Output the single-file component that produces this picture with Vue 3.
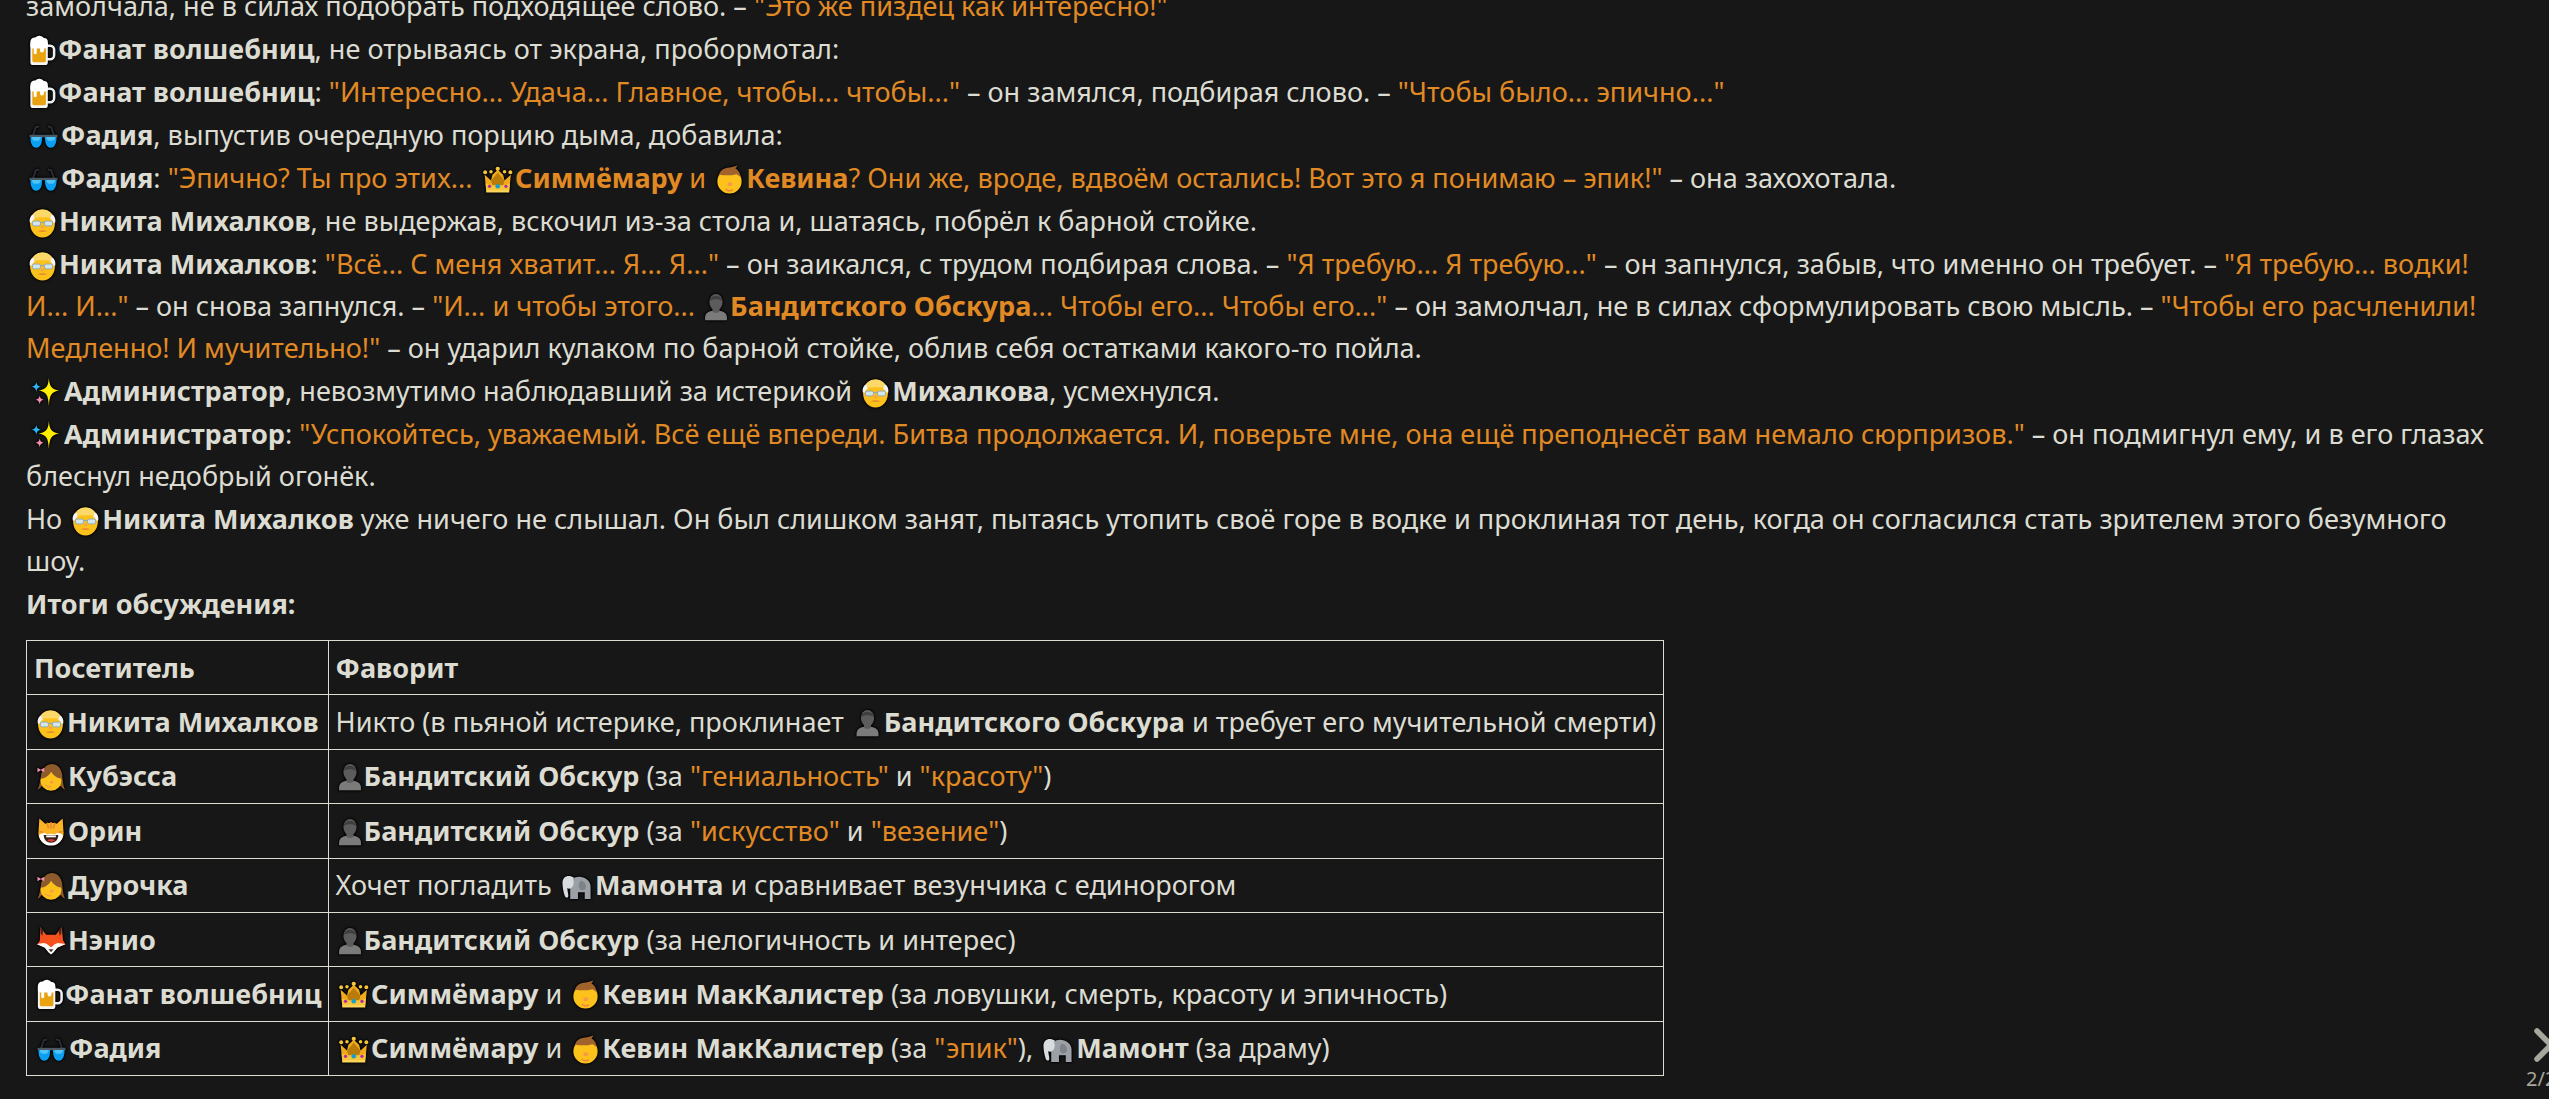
<script setup>
const rows = [
  { e: 'oldman', n: 'Никита Михалков' },
  { e: 'girl', n: 'Кубэсса' },
  { e: 'cat', n: 'Орин' },
  { e: 'girl', n: 'Дурочка' },
  { e: 'fox', n: 'Нэнио' },
  { e: 'beer', n: 'Фанат волшебниц' },
  { e: 'shades', n: 'Фадия' },
]
</script>

<template>
  <div class="page">
    <svg class="defs" aria-hidden="true">
      <defs>
        <symbol id="beer" viewBox="0 0 32 32">
          <path d="M21 11h3.500a4 4 0 0 1 4 4v6a4 4 0 0 1-4 4H21" fill="none" stroke="#eceff1" stroke-width="2.600"/>
          <path d="M4 8h18v20a3 3 0 0 1-3 3H7a3 3 0 0 1-3-3z" fill="#f5f5f5"/>
          <path d="M6 14h14v12.500a1.500 1.500 0 0 1-1.500 1.500h-11A1.500 1.500 0 0 1 6 26.500z" fill="#eaa310"/>
          <path d="M4 7a4.500 4.500 0 0 1 5-4.500 6 6 0 0 1 9 .5 4 4 0 0 1 4 4v5a2 2 0 0 1-3.500 1l-.5 3a2 2 0 0 1-4 0v-2a2 2 0 0 0-3.500 0v5a2 2 0 0 1-3 0v-6l-1 .5A2.200 2.200 0 0 1 4 12z" fill="#fff"/>
        </symbol>
        <symbol id="shades" viewBox="0 0 32 32">
          <path d="M4.500 17 8 6.500l3.500-1M27.500 17 24 6.500l-3.500-1" fill="none" stroke="#2a2f36" stroke-width="2"/>
          <path d="M1.500 15.500h29" stroke="#4a5963" stroke-width="2.600"/>
          <path d="M2.500 16.500h12c.3 7-2 11-6 11s-6-4-6-11zM17.500 16.500h12c0 7-2 11-6 11s-6-4-6-11z" fill="#0a9ff0"/>
          <path d="M4 16.500h9c0 3-1.500 4-4.500 4s-4.500-1-4.500-4zM19 16.500h9c0 3-1.500 4-4.500 4s-4.500-1-4.500-4z" fill="#4fc3f7"/>
        </symbol>
        <symbol id="crown" viewBox="0 0 32 32">
          <path d="M2.500 11l6.500 6 1.500-6 5.500-5 5.500 5 1.500 6 6.500-6-1.500 16H4z" fill="#f0a91c"/>
          <path d="M9 17l7-8 7 8-1.500 5h-11z" fill="#b97c0a"/>
          <path d="M3.500 20c8 3 17 3 25 0l-.8 9H4.300z" fill="#f7c53a"/>
          <path d="M4.200 27h23.600v2.500H4.200z" fill="#fbd45c"/>
          <circle cx="3" cy="8.500" r="2" fill="#f7c53a"/><circle cx="16" cy="5" r="2.200" fill="#f7c53a"/><circle cx="29" cy="8.500" r="2" fill="#f7c53a"/>
          <circle cx="9" cy="8" r="1.800" fill="#f7c53a"/><circle cx="23" cy="8" r="1.800" fill="#f7c53a"/>
          <circle cx="16" cy="23" r="2.400" fill="#1a9fc4"/><circle cx="7.500" cy="23" r="1.700" fill="#b02aa8"/><circle cx="24.500" cy="23" r="1.700" fill="#b02aa8"/>
        </symbol>
        <symbol id="man" viewBox="0 0 32 32">
          <circle cx="16" cy="18" r="12.500" fill="#fcc21b"/>
          <path d="M4.500 14C5 7 10 3.500 16 3.500c2.500 0 4.500-1 8-2-.5 1.500-1 2-2 3 3.500 2 5.500 5.500 5.500 9.500-1.500-2-3-3-4.500-3.500-5 1.500-12 1.500-17 .5-.7.800-1.200 1.800-1.500 3z" fill="#a1622c"/>
          <path d="M14 19.500c2-1.500 5-.5 5 1.500s-3 2.500-5 1.500z" fill="#f79a4a"/>
          <path d="M12 26c2 1.800 5 2 7.500 .5" fill="none" stroke="#ef8a3c" stroke-width="1.800"/>
        </symbol>
        <symbol id="oldman" viewBox="0 0 32 32">
          <ellipse cx="16" cy="17" rx="12.800" ry="14.500" fill="#fcc21b"/>
          <path d="M5 12C5 6 10 2.500 16 2.500S27 6 27 12c-3-2-19-2-22 0z" fill="#fbd86a"/>
          <path d="M2.800 16c-.6-4 .8-7 3.500-8.500L8 12c-1.500 1-2.500 2-3 4zM29.200 16c.6-4-.8-7-3.500-8.500L24 12c1.500 1 2.500 2 3 4z" fill="#f5f5f5"/>
          <rect x="5.500" y="14.500" width="8.500" height="5" rx="2" fill="#d3e6ec" stroke="#93a7af" stroke-width="1"/>
          <rect x="18" y="14.500" width="8.500" height="5" rx="2" fill="#d3e6ec" stroke="#93a7af" stroke-width="1"/>
          <path d="M14 16h4" stroke="#93a7af" stroke-width="1.200"/>
          <path d="M14 19v3h4v-3z" fill="#f4a93a"/>
          <path d="M11 25c3-1.500 7-1.500 10 0-3 1-7 1-10 0z" fill="#e5892e"/>
        </symbol>
        <symbol id="bust" viewBox="0 0 32 32">
          <path d="M3.500 31v-3c0-5 5-8 12.500-8s12.500 3 12.500 8v3z" fill="#7b7b7b"/>
          <path d="M12 21c0 2 8 2 8 0v-4h-8z" fill="#5c5c5c"/>
          <ellipse cx="16" cy="10.500" rx="7.500" ry="9.500" fill="#5c5c5c"/>
          <path d="M8.500 9c2-8 13-8 15 0-4-2.500-11-2.500-15 0z" fill="#3f3f3f"/>
        </symbol>
        <symbol id="sparkles" viewBox="0 0 32 32">
          <path d="M20 1c.7 9 2.800 11.500 10.500 13-7.700 1.500-9.800 4-10.500 16-.7-12-2.800-14.500-10.500-16C17.200 12.500 19.300 10 20 1z" fill="#ffee00"/>
          <path d="M7 5c.4 3 1.300 4.100 4.500 5-3.200.9-4.100 2-4.500 5.500C6.600 12 5.700 10.900 2.500 10 5.700 9.100 6.600 8 7 5z" fill="#29b6f6"/>
          <path d="M10.500 19c.4 2.600 1.100 3.500 4 4.500-2.900 1-3.600 1.900-4 5-.4-3.100-1.100-4-4-5 2.900-1 3.600-1.900 4-4.500z" fill="#f48fb1"/>
        </symbol>
        <symbol id="elephant" viewBox="0 0 32 32">
          <path d="M9 29V14c0-5 4-8 9-8 6 0 12 4 12 10v13h-6v-7h-7v7h-4z" fill="#9aa0a6"/>
          <path d="M13 7C7 3 1 6 1 12c0 4 1 10 2.500 14 1 2 3.500 2 3.500-.5 0-3-1-5-1-8 1 1 2.500 1 4 0 3-2 3-6 2-9.500z" fill="#d8dcdf"/>
          <path d="M20 10c-2 1-3 6-1 9 2 1.500 5 .5 6-1 1-3-1-8-5-8z" fill="#7d8388"/>
        </symbol>
        <symbol id="girl" viewBox="0 0 32 32">
          <path d="M6 25c-1 2-2.500 3-4 3.500C4.500 25 5 18 6 13 7.500 6 12 2 17 2s9.500 4 10.500 11c.5 5 1 12 3 15.500-1.500-.5-3-1.500-4-3.500z" fill="#8d5a2b"/>
          <circle cx="16" cy="19" r="10.800" fill="#fcc21b"/>
          <path d="M5.500 17c4.500 0 8.500-3 10.500-7 2 3 5.500 6.500 10.500 7 0-8-4.500-13-10.500-13S5.500 9 5.500 17z" fill="#8d5a2b"/>
          <path d="M9 22c2 2.500 5 3.500 8 3-1.500 2.500-6 2-8-3z" fill="#f79a4a"/>
          <path d="M15 20c1.500-1 3.500-.5 3.500 1s-2 1.500-3.500 1z" fill="#f79a4a"/>
          <path d="M2 6l3.500 2L9 6v4.500L5.500 8.500 2 10.500z" fill="#f48fb1"/>
        </symbol>
        <symbol id="cat" viewBox="0 0 32 32">
          <path d="M4 2.500 10 8c4-1.500 8-1.500 12 0l6-5.500 1 15c0 7-5.500 12.500-13 12.500S3 24.500 3 17.500z" fill="#fbb524"/>
          <path d="M12 7l1.500 6M16 6.500V13M20 7l-1.500 6M4 16l4 1M28 16l-4 1" stroke="#e5892e" stroke-width="1.800" fill="none"/>
          <path d="M3.500 20c2-2.500 6-3.500 8.500-1 2.500-1 5.500-1 8 0 2.500-2.500 6.500-1.500 8.500 1-1 6-6 10.500-12.500 10.500S4.500 26 3.500 20z" fill="#fff"/>
          <path d="M8.500 19.500h15c0 5-3 8-7.500 8s-7.500-3-7.500-8z" fill="#3a2218"/>
          <path d="M11 20h10v2H11z" fill="#fff"/><path d="M12 25c2-1.500 6-1.500 8 0-2 2-6 2-8 0z" fill="#e53935"/>
        </symbol>
        <symbol id="fox" viewBox="0 0 32 32">
          <path d="M5 2l6 8h10l6-8 1.500 14 2.500 4-8 3-6.500 7-6.500-7-8-3 2.500-4z" fill="#f4511e"/>
          <path d="M5 2l2.800 4 .5-1L7 11 5.500 9zM27 2l-2.800 4-.5-1L25 11l1.500-2z" fill="#3a2a22"/>
          <path d="M1 19.500l8-1c3 .5 5 3 7 4.500 2-1.500 4-4 7-4.500l8 1-8.500 4-4 5-2.500 2-2.500-2-4-5z" fill="#fafafa"/>
          <path d="M13.500 25h5L16 28z" fill="#3a2a22"/>
        </symbol>
      </defs>
    </svg>

    <article class="text">
      <p>замолчала, не в силах подобрать подходящее слово. – <q>"Это же пиздец как интересно!"</q></p>
      <p><svg class="e beer"><use href="#beer"/></svg><b>Фанат волшебниц</b>, не отрываясь от экрана, пробормотал:</p>
      <p><svg class="e beer"><use href="#beer"/></svg><b>Фанат волшебниц</b>: <q>"Интересно... Удача... Главное, чтобы... чтобы..."</q> – он замялся, подбирая слово. – <q>"Чтобы было... эпично..."</q></p>
      <p><svg class="e shades"><use href="#shades"/></svg><b>Фадия</b>, выпустив очередную порцию дыма, добавила:</p>
      <p><svg class="e shades"><use href="#shades"/></svg><b>Фадия</b>: <q>"Эпично? Ты про этих... <svg class="e crown"><use href="#crown"/></svg><b>Симмёмару</b> и <svg class="e man"><use href="#man"/></svg><b>Кевина</b>? Они же, вроде, вдвоём остались! Вот это я понимаю – эпик!"</q> – она захохотала.</p>
      <p><svg class="e oldman"><use href="#oldman"/></svg><b>Никита Михалков</b>, не выдержав, вскочил из-за стола и, шатаясь, побрёл к барной стойке.</p>
      <p><svg class="e oldman"><use href="#oldman"/></svg><b>Никита Михалков</b>: <q>"Всё... С меня хватит... Я... Я..."</q> – он заикался, с трудом подбирая слова. – <q>"Я требую... Я требую..."</q> – он запнулся, забыв, что именно он требует. – <q>"Я требую... водки! И... И..."</q> – он снова запнулся. – <q>"И... и чтобы этого... <svg class="e bust"><use href="#bust"/></svg><b>Бандитского Обскура</b>... Чтобы его... Чтобы его..."</q> – он замолчал, не в силах сформулировать свою мысль. – <q>"Чтобы его расчленили! Медленно! И мучительно!"</q> – он ударил кулаком по барной стойке, облив себя остатками какого-то пойла.</p>
      <p><svg class="e sparkles"><use href="#sparkles"/></svg><b>Администратор</b>, невозмутимо наблюдавший за истерикой <svg class="e oldman"><use href="#oldman"/></svg><b>Михалкова</b>, усмехнулся.</p>
      <p><svg class="e sparkles"><use href="#sparkles"/></svg><b>Администратор</b>: <q>"Успокойтесь, уважаемый. Всё ещё впереди. Битва продолжается. И, поверьте мне, она ещё преподнесёт вам немало сюрпризов."</q> – он подмигнул ему, и в его глазах блеснул недобрый огонёк.</p>
      <p>Но <svg class="e oldman"><use href="#oldman"/></svg><b>Никита Михалков</b> уже ничего не слышал. Он был слишком занят, пытаясь утопить своё горе в водке и проклиная тот день, когда он согласился стать зрителем этого безумного шоу.</p>
      <p><b>Итоги обсуждения:</b></p>

      <table>
        <thead>
          <tr><th>Посетитель</th><th>Фаворит</th></tr>
        </thead>
        <tbody>
          <tr>
            <td><svg :class="['e', rows[0].e]"><use :href="'#' + rows[0].e"/></svg><b>{{ rows[0].n }}</b></td>
            <td>Никто (в пьяной истерике, проклинает <svg class="e bust wide"><use href="#bust"/></svg><b>Бандитского Обскура</b> и требует его мучительной смерти)</td>
          </tr>
          <tr>
            <td><svg :class="['e', rows[1].e]"><use :href="'#' + rows[1].e"/></svg><b>{{ rows[1].n }}</b></td>
            <td><svg class="e bust"><use href="#bust"/></svg><b>Бандитский Обскур</b> (за <q>"гениальность"</q> и <q>"красоту"</q>)</td>
          </tr>
          <tr>
            <td><svg :class="['e', rows[2].e]"><use :href="'#' + rows[2].e"/></svg><b>{{ rows[2].n }}</b></td>
            <td><svg class="e bust"><use href="#bust"/></svg><b>Бандитский Обскур</b> (за <q>"искусство"</q> и <q>"везение"</q>)</td>
          </tr>
          <tr>
            <td><svg :class="['e', rows[3].e]"><use :href="'#' + rows[3].e"/></svg><b>{{ rows[3].n }}</b></td>
            <td>Хочет погладить <svg class="e elephant"><use href="#elephant"/></svg><b>Мамонта</b> и сравнивает везунчика с единорогом</td>
          </tr>
          <tr>
            <td><svg :class="['e', rows[4].e]"><use :href="'#' + rows[4].e"/></svg><b>{{ rows[4].n }}</b></td>
            <td><svg class="e bust"><use href="#bust"/></svg><b>Бандитский Обскур</b> (за нелогичность и интерес)</td>
          </tr>
          <tr>
            <td><svg :class="['e', rows[5].e]"><use :href="'#' + rows[5].e"/></svg><b>{{ rows[5].n }}</b></td>
            <td><svg class="e crown"><use href="#crown"/></svg><b>Симмёмару</b> и <svg class="e man"><use href="#man"/></svg><b>Кевин МакКалистер</b> (за ловушки, смерть, красоту и эпичность)</td>
          </tr>
          <tr>
            <td><svg :class="['e', rows[6].e]"><use :href="'#' + rows[6].e"/></svg><b>{{ rows[6].n }}</b></td>
            <td><svg class="e crown"><use href="#crown"/></svg><b>Симмёмару</b> и <svg class="e man"><use href="#man"/></svg><b>Кевин МакКалистер</b> (за <q>"эпик"</q>), <svg class="e elephant"><use href="#elephant"/></svg><b>Мамонт</b> (за драму)</td>
          </tr>
        </tbody>
      </table>
    </article>

    <div class="pager">
      <svg class="chev" viewBox="0 0 20 34"><path d="M3 3l14 14L3 31" fill="none" stroke="#a7a79e" stroke-width="5.500" stroke-linecap="round" stroke-linejoin="round"/></svg>
      <span>2/2</span>
    </div>
  </div>
</template>

<style>
html, body { margin: 0; background: #171717; overflow: hidden; }
</style>

<style scoped>
.page {
  position: relative;
  width: 2549px;
  height: 1099px;
  overflow: hidden;
  background: #171717;
  color: #dcdcd2;
  font-family: "Noto Sans", sans-serif;
  font-size: 27.050px;
  line-height: 42px;
}
.defs { position: absolute; width: 0; height: 0; }
.text {
  width: 2468px;
  margin-top: -15px;
  padding-left: 26px;
}
p { margin: 0 0 1px; }
b { font-weight: 700; }
q { color: #e18a24; quotes: none; }
q::before, q::after { content: none; }
.e {
  display: inline-block;
  width: 34px;
  height: 31px;
  vertical-align: -6.500px;
  filter: drop-shadow(0 0 1px #000) drop-shadow(0 0 1px #000);
}
.e.bust { width: 28px; height: 28px; vertical-align: -5px; }
.e.bust.wide { width: 33px; }
.e.beer { width: 32px; }
.e.oldman, .e.man { width: 33px; }
.e.shades { width: 35px; }
.e.elephant { width: 36px; }
.e.crown { width: 35.500px; }
.e.sparkles { width: 38px; }
td .e.beer { width: 31px; }
table {
  border-collapse: collapse;
  margin-top: 15px;
}
th, td {
  border: 1px solid #dcdcd2;
  padding: 5.700px 7px;
  text-align: left;
  font-weight: 400;
  white-space: nowrap;
}
th:first-child, td:first-child { padding-right: 6px; }
th { font-weight: 700; }
.pager {
  position: absolute;
  right: -10px;
  top: 1028px;
  width: 33px;
  color: #a7a79e;
  font-size: 20px;
  line-height: 24px;
}
.chev { display: block; width: 20px; height: 34px; margin: 0 0 5px 8px; }
</style>
